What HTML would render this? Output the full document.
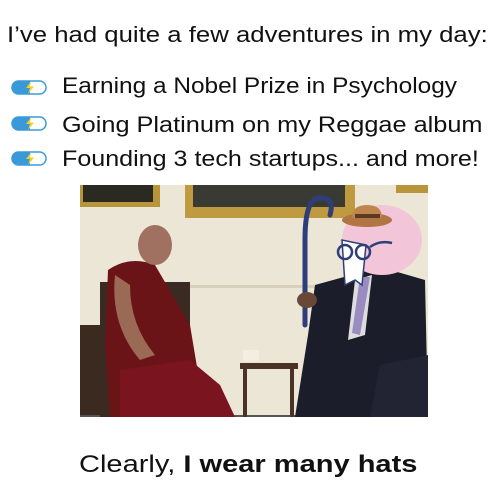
<!DOCTYPE html>
<html><head><style>
body{margin:0;width:500px;height:500px;background:#fff;font-family:"Liberation Sans",sans-serif;color:#111;position:relative;overflow:hidden}
.t{position:absolute;white-space:nowrap;font-size:22px;transform-origin:0 50%}
.ic{position:absolute;left:11px}
</style></head><body>
<div class="t" style="left:7px;top:22px;transform:scaleX(1.17)">I’ve had quite a few adventures in my day:</div>
<svg class="ic" style="top:80px" width="36" height="15" viewBox="0 0 36 15"><rect x="1" y="1" width="34" height="13" rx="6.5" fill="#fff" stroke="#3a9ad9" stroke-width="1.5"/><path d="M7.5 1H19v13H7.5a6.5 6.5 0 0 1 0-13z" fill="#3a9ad9"/><path d="M20 1.5l-5 6.5h4l-2 6 6-7.5h-4z" fill="#f5d020"/></svg>
<div class="t" style="left:62px;top:73px;transform:scaleX(1.11)">Earning a Nobel Prize in Psychology</div>
<svg class="ic" style="top:116px" width="36" height="15" viewBox="0 0 36 15"><rect x="1" y="1" width="34" height="13" rx="6.5" fill="#fff" stroke="#3a9ad9" stroke-width="1.5"/><path d="M7.5 1H19v13H7.5a6.5 6.5 0 0 1 0-13z" fill="#3a9ad9"/><path d="M20 1.5l-5 6.5h4l-2 6 6-7.5h-4z" fill="#f5d020"/></svg>
<div class="t" style="left:62px;top:112px;transform:scaleX(1.15)">Going Platinum on my Reggae album</div>
<svg class="ic" style="top:151px" width="36" height="15" viewBox="0 0 36 15"><rect x="1" y="1" width="34" height="13" rx="6.5" fill="#fff" stroke="#3a9ad9" stroke-width="1.5"/><path d="M7.5 1H19v13H7.5a6.5 6.5 0 0 1 0-13z" fill="#3a9ad9"/><path d="M20 1.5l-5 6.5h4l-2 6 6-7.5h-4z" fill="#f5d020"/></svg>
<div class="t" style="left:62px;top:146px;transform:scaleX(1.14)">Founding 3 tech startups... and more!</div>
<svg style="position:absolute;left:80px;top:185px" width="348" height="232" viewBox="0 0 348 232">
<rect width="348" height="232" fill="#ece6d6"/>
<rect x="0" y="0" width="80" height="22" fill="#b8953a"/><rect x="3" y="0" width="70" height="17" fill="#2b2a22"/>
<rect x="105" y="0" width="170" height="33" fill="#c09a40"/><rect x="113" y="0" width="152" height="22" fill="#3a3a34"/>
<rect x="316" y="0" width="32" height="8" fill="#b8953a"/>
<rect x="110" y="100" width="140" height="3" fill="#d8d0bb"/>
<rect x="0" y="230" width="348" height="2" fill="#555"/>
<rect x="0" y="140" width="22" height="90" fill="#3a2a20"/>
<rect x="20" y="97" width="90" height="135" fill="#3a2a22"/>
<path d="M28 85 Q50 70 75 80 L110 140 L120 200 L150 232 L30 232 L25 160 Z" fill="#6b1418"/>
<path d="M40 232 L40 185 L110 175 L140 200 L155 232Z" fill="#7a1520"/>
<ellipse cx="75" cy="60" rx="17" ry="20" fill="#a07060"/>
<path d="M35 90 Q30 140 60 175 L75 170 Q50 140 50 100Z" fill="#9b6a55"/>
<rect x="160" y="178" width="58" height="6" fill="#4a3226"/><rect x="163" y="184" width="4" height="48" fill="#4a3226"/><rect x="210" y="184" width="4" height="48" fill="#4a3226"/>
<rect x="163" y="165" width="16" height="11" fill="#f3eee0"/>
<path d="M235 100 L300 82 L345 95 L348 232 L215 232 L228 150 Z" fill="#1b1d2a"/>
<path d="M275 95 L292 90 L285 150 L268 155Z" fill="#ddd"/><path d="M280 92 L290 92 L280 150 L272 148Z" fill="#9a8cc0"/>
<path d="M300 180 L348 170 L348 232 L290 232Z" fill="#222433"/>
<path d="M225 55 Q225 12 240 13 Q255 12 250 30" fill="none" stroke="#2e3e7a" stroke-width="5" stroke-linecap="round"/>
<line x1="225" y1="55" x2="225" y2="140" stroke="#2e3e7a" stroke-width="5" stroke-linecap="round"/>
<ellipse cx="227" cy="115" rx="10" ry="8" fill="#6a4838"/>
<ellipse cx="302" cy="55" rx="40" ry="35" fill="#f2c6d8"/>
<path d="M260 55 Q262 70 270 82 Q275 90 280 70Z" fill="#f2c6d8"/>
<path d="M262 55 L265 100 L275 95 L282 100 L286 60Z" fill="#fff" stroke="#2e3e7a" stroke-width="1.5"/>
<circle cx="265" cy="67" r="7" fill="none" stroke="#2e3e7a" stroke-width="2.5"/><circle cx="283" cy="67" r="7" fill="none" stroke="#2e3e7a" stroke-width="2.5"/>
<path d="M290 62 Q300 55 312 58" stroke="#2e3e7a" stroke-width="2.5" fill="none"/>
<ellipse cx="287" cy="35" rx="25" ry="7" fill="#b07542"/>
<path d="M272 33 Q272 20 287 20 Q302 20 302 33Z" fill="#c0844e"/>
<rect x="275" y="29" width="25" height="4" fill="#5a3a20"/>
</svg>
<div class="t" style="left:79px;top:451px;font-size:24px;transform:scaleX(1.21)">Clearly, <b>I wear many hats</b></div>
</body></html>
